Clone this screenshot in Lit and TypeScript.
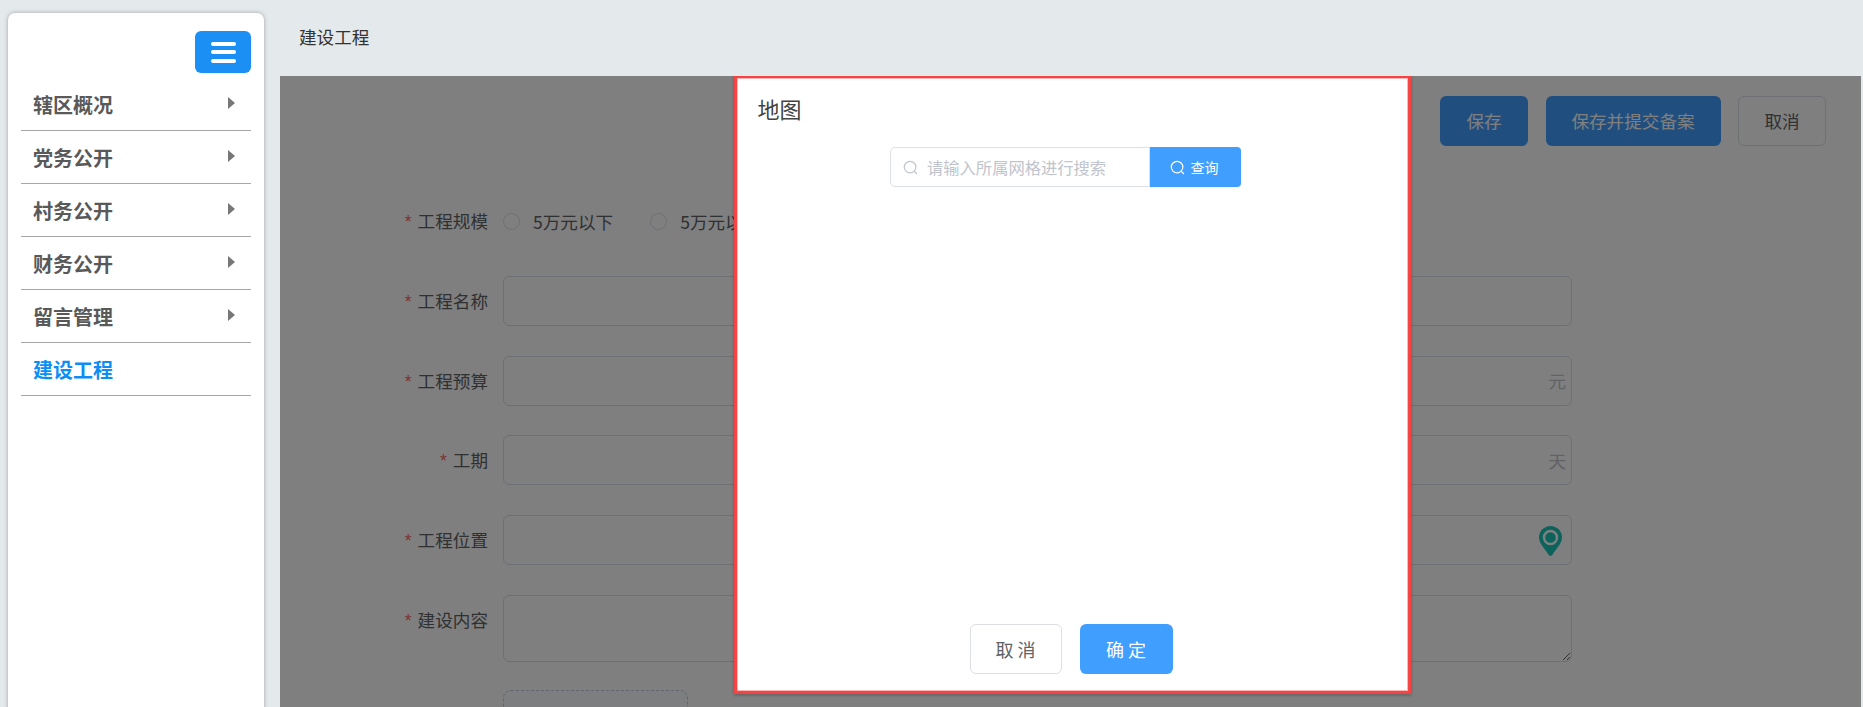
import { LitElement, html, css } from "lit";
import { customElement } from "lit/decorators.js";

const searchIcon = html`<svg class="si" viewBox="0 0 14 14" width="15" height="15" fill="none" stroke="currentColor" stroke-width="1.1"><circle cx="6.6" cy="6.6" r="5.4"></circle><path d="M10.4 10.4 12.6 12.6" stroke-linecap="round"></path></svg>`;

@customElement("app-root")
export class AppRoot extends LitElement {
  static styles = css`
    :host { display: flex; width: 1863px; height: 707px; overflow: hidden; background: #e4e9ec;
      font-family: "Noto Sans CJK SC", "Liberation Sans", sans-serif; box-sizing: border-box; }
    * { box-sizing: border-box; }
    .side { width: 256px; margin: 13px 16px 0 8px; height: 720px; flex: none; background: #fff; border-radius: 7px;
      box-shadow: 0 0 4px rgba(0,0,0,.3); padding: 18px 13px 0; }
    .toggle { display: flex; flex-direction: column; justify-content: center; gap: 4.5px; width: 56px; height: 42px; margin: 0 0 5px auto;
      background: #1c8ff5; border-radius: 6px; padding: 0 15.5px; }
    .toggle i { display: block; height: 4px; border-radius: 2px; background: #fff; }
    .mi { display: flex; align-items: center; justify-content: space-between; height: 53px; padding: 0 16px 0 12px;
      border-bottom: 1px solid #a6a6a6; font-size: 20px; font-weight: 700; color: #595959; }
    .mi.on { color: #0d8ef5; }
    .arrow { width: 0; height: 0; border-left: 7px solid #777; border-top: 6.5px solid transparent; border-bottom: 6.5px solid transparent; margin-bottom: 2px; }
    .main { flex: 1; display: flex; flex-direction: column; margin-right: 2px; min-width: 0; }
    .crumb { height: 76px; flex: none; display: flex; align-items: center; padding: 0 0 4px 19px; font-size: 17.6px; color: #333; }
    .content { position: relative; flex: 1; background: #fff; padding-top: 20px; overflow: hidden; }
    .bar { display: flex; justify-content: flex-end; padding-right: 35px; gap: 17.5px; }
    .btn { height: 50px; border-radius: 6px; font-size: 17.6px; display: flex; align-items: center; justify-content: center; }
    .bar .btn { padding-bottom: 2px; }
    .btn.p { background: #409eff; color: #fff; }
    .btn.d { border: 1px solid #dcdfe6; color: #606266; background: #fff; }
    .w88 { width: 88px; }
    .w175 { width: 175px; }
    form { display: flex; flex-direction: column; gap: 29.7px; margin-top: 50.4px; padding-right: 289px; }
    .row { display: flex; gap: 15px; min-height: 50px; }
    .up-row { margin-top: -2px; }
    .lab { width: 208px; height: 50px; flex: none; line-height: 49px; text-align: right; font-size: 17.6px; color: #606266; }
    .lab b { font-weight: 400; color: #f56c6c; margin-right: 6px; font-family: "Liberation Sans", sans-serif; }
    .field { flex: 1; position: relative; height: 50px; border: 1px solid #dcdfe6; border-radius: 6px; background: #fff;
      display: flex; align-items: center; justify-content: flex-end; padding-right: 5px; color: #c0c4cc; font-size: 17.6px; }
    .radios { flex: 1; display: flex; align-items: center; height: 50px; font-size: 17.6px; color: #606266; }
    .radio { width: 17px; height: 17px; border: 1px solid #dcdfe6; border-radius: 50%; background: #fff; margin-right: 13px; }
    .rt { margin-right: 37px; }
    .pin { margin-right: 4px; margin-top: 2px; }
    textarea { flex: 1; display: block; height: 67px; border: 1px solid #dcdfe6; border-radius: 6px; background: #fff; resize: vertical; outline: none; }
    .up { width: 185px; height: 185px; border: 1px dashed #c0ccda; border-radius: 8px; background: #fbfdff; }
    .mask { position: absolute; inset: 0; background: rgba(0,0,0,.5); display: flex; justify-content: center; padding-left: 3px; }
    .modal { width: 677px; height: 619px; margin-top: -1px; background: #fff; border: 3px solid #f44444;
      box-shadow: 0 1px 3px rgba(0,0,0,.3), inset 0 0 0 1px rgba(255,90,90,.45);
      display: flex; flex-direction: column; padding: 14px 20px 17px 21px; }
    h2 { margin: 0; font-size: 22px; font-weight: 400; line-height: 32px; color: #444; }
    .search { display: flex; justify-content: center; margin-top: 23px; padding-right: 14px; }
    .inp { width: 260px; height: 40px; border: 1px solid #dcdfe6; border-radius: 5px 0 0 5px; display: flex; align-items: center; gap: 9px;
      padding-left: 12px; font-size: 16.3px; color: #c0c4cc; }
    .go { width: 91px; height: 40px; background: #409eff; color: #fff; border-radius: 0 4px 4px 0; display: flex; align-items: center; justify-content: center;
      gap: 6px; font-size: 14px; padding-right: 3px; }
    .spacer { flex: 1; }
    .foot { display: flex; justify-content: center; gap: 18px; padding-right: 3px; }
    .foot .btn { height: 50px; font-size: 18px; }
    .c { width: 92px; border: 1px solid #dcdfe6; color: #606266; background: #fff; }
    .o { width: 93px; background: #409eff; color: #fff; }
  `;

  render() {
    const menu = ["辖区概况", "党务公开", "村务公开", "财务公开", "留言管理"];
    return html`
      <aside class="side">
        <div class="toggle"><i></i><i></i><i></i></div>
        ${menu.map((m) => html`<div class="mi"><span>${m}</span><span class="arrow"></span></div>`)}
        <div class="mi on"><span>建设工程</span></div>
      </aside>
      <div class="main">
        <div class="crumb">建设工程</div>
        <div class="content">
          <div class="bar">
            <div class="btn p w88">保存</div>
            <div class="btn p w175">保存并提交备案</div>
            <div class="btn d w88">取消</div>
          </div>
          <form>
            <div class="row">
              <div class="lab"><b>*</b>工程规模</div>
              <div class="radios">
                <span class="radio"></span><span class="rt">5万元以下</span>
                <span class="radio"></span><span class="rt">5万元以上</span>
              </div>
            </div>
            <div class="row"><div class="lab"><b>*</b>工程名称</div><div class="field"></div></div>
            <div class="row"><div class="lab"><b>*</b>工程预算</div><div class="field">元</div></div>
            <div class="row"><div class="lab"><b>*</b>工期</div><div class="field">天</div></div>
            <div class="row"><div class="lab"><b>*</b>工程位置</div>
              <div class="field">
                <svg class="pin" width="23" height="30" viewBox="0 0 23 30">
                  <path d="M11.5 0C5.1 0 0 5.1 0 11.3c0 3.2 1.2 5.600 3 8.200L10 29.200c.8 1 2.200 1 3 0l7-9.700c1.800-2.600 3-5 3-8.200C23 5.100 17.900 0 11.500 0z" fill="#1bc4b9"></path>
                  <circle cx="11.500" cy="11.500" r="6.500" fill="none" stroke="#fff" stroke-width="2.500"></circle>
                </svg>
              </div>
            </div>
            <div class="row"><div class="lab"><b>*</b>建设内容</div><textarea></textarea></div>
            <div class="row up-row"><div class="lab">施工图附件</div><div class="up"></div></div>
          </form>
          <div class="mask">
            <div class="modal">
              <h2>地图</h2>
              <div class="search">
                <div class="inp">${searchIcon}<span>请输入所属网格进行搜索</span></div>
                <div class="go">${searchIcon}<span>查询</span></div>
              </div>
              <div class="spacer"></div>
              <div class="foot">
                <div class="btn c">取 消</div>
                <div class="btn o">确 定</div>
              </div>
            </div>
          </div>
        </div>
      </div>
    `;
  }
}
